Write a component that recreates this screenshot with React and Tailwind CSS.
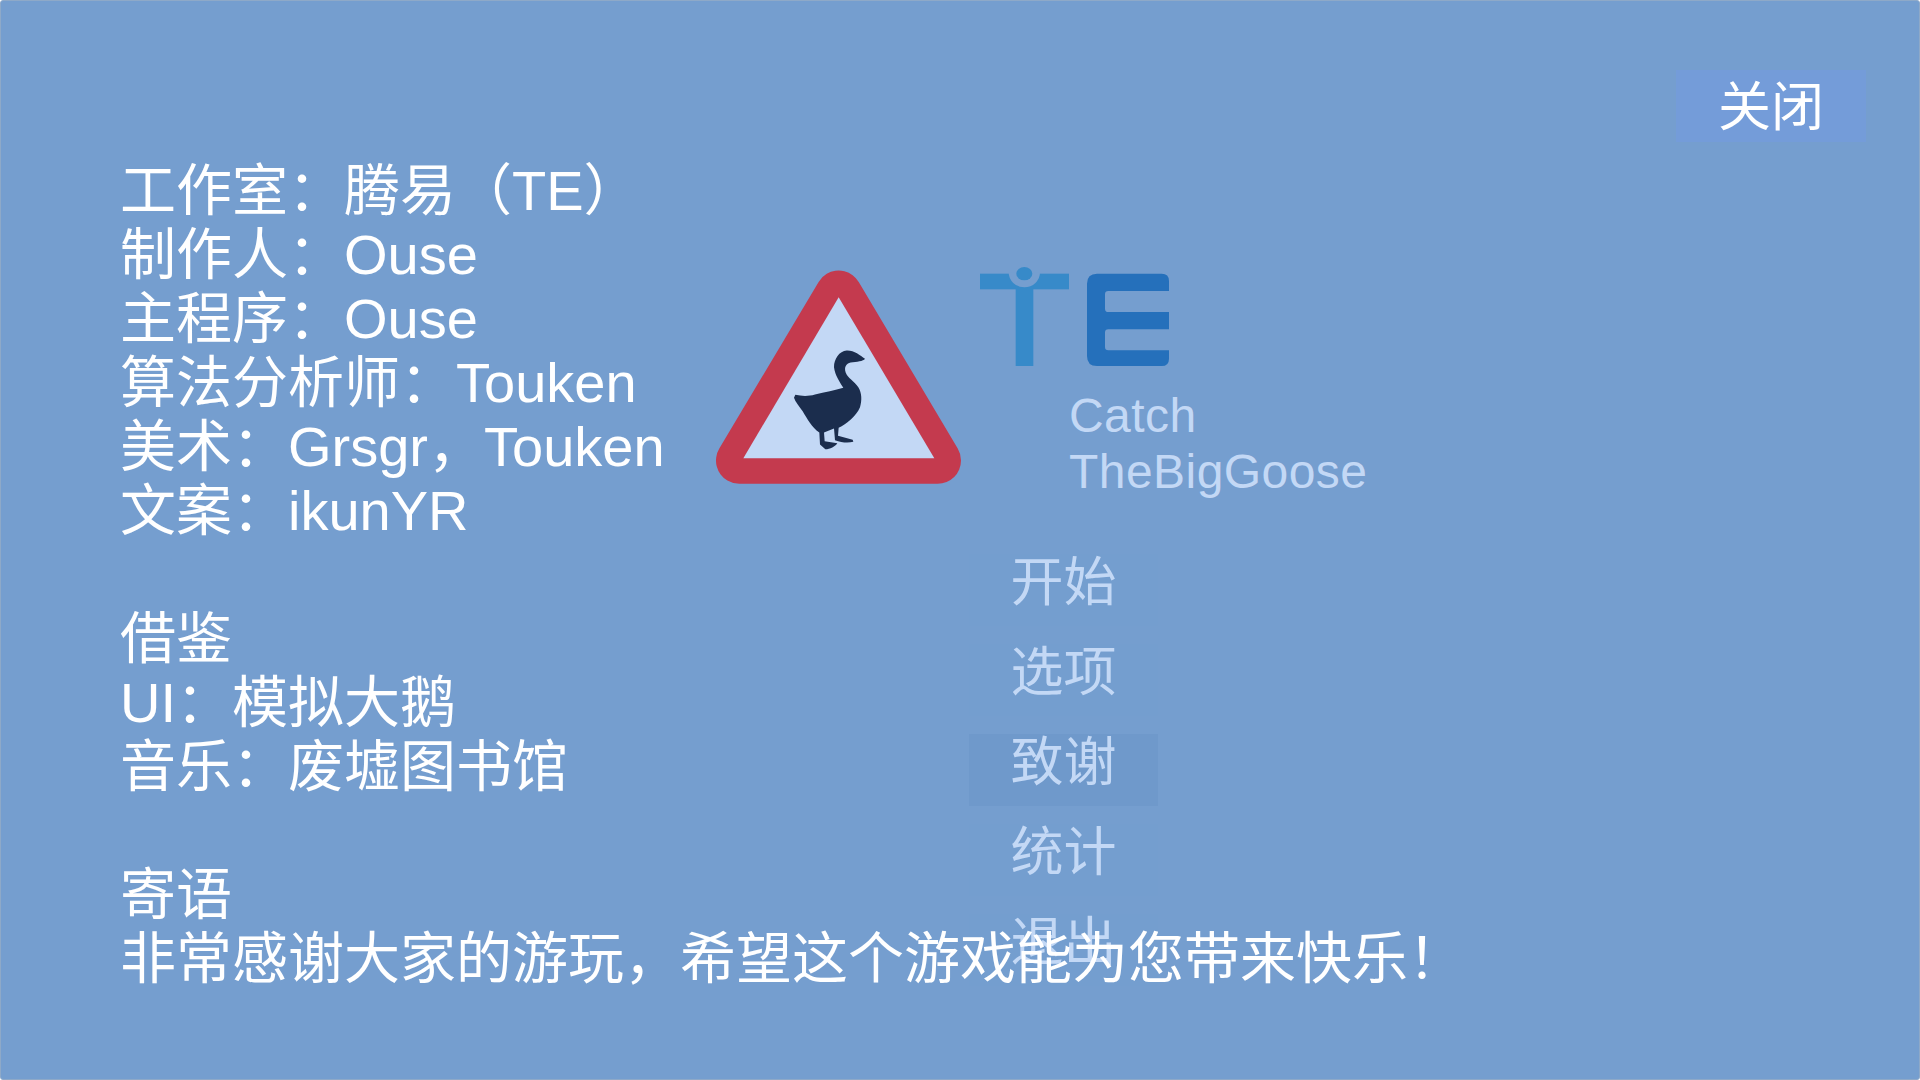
const FONT = { fontFamily: '"Liberation Sans", "Noto Sans CJK SC", sans-serif' };

const credits = [
  '工作室：腾易（TE）',
  '制作人：Ouse',
  '主程序：Ouse',
  '算法分析师：Touken',
  '美术：Grsgr，Touken',
  '文案：ikunYR',
  '',
  '借鉴',
  'UI：模拟大鹅',
  '音乐：废墟图书馆',
  '',
  '寄语',
  '非常感谢大家的游玩，希望这个游戏能为您带来快乐！',
];

const menu = ['开始', '选项', '致谢', '统计', '退出'];

function Sign() {
  return (
    <svg width="245" height="215" viewBox="48 60 735 642" className="shrink-0 mt-[3px]">
      <polygon points="416,130 118,630 713,630" fill="#c43a4e" stroke="#c43a4e" strokeWidth="140" strokeLinejoin="round" />
      <polygon points="416,140 130,623 703,623" fill="#c3d8f5" />
      <path
        fill="#1b2d4d"
        d="M495 325 C490 333 470 334 452 336 C438 340 432 350 437 366 C443 382 462 392 475 410 C486 428 486 450 480 470 C468 498 440 520 416 532 L414 556 L458 568 L460 574 C445 578 425 577 405 569 L402 534 L372 546 L374 572 L412 578 C406 588 390 596 376 596 L360 582 L358 546 C335 530 322 505 308 482 C298 468 286 455 282 442 L286 433 C305 437 325 438 345 432 C375 425 405 420 430 412 C420 395 405 375 402 350 C402 325 418 302 440 300 C462 299 480 314 495 325 Z"
      />
    </svg>
  );
}

function TeLogo() {
  return (
    <svg width="190" height="100" viewBox="60 50 570 300" className="block">
      <rect x="60" y="70" width="267" height="47" fill="#378ac9" />
      <rect x="167" y="100" width="53" height="247" fill="#378ac9" />
      <path d="M146 66 A47 45 0 0 0 240 66 Z" fill="#759ecf" />
      <ellipse cx="193" cy="70" rx="24" ry="20" fill="#378ac9" />
      <path
        fill="#2570bb"
        d="M411 70 H605 Q627 70 627 92 V122 H445 Q435 122 435 132 V175 Q435 185 445 185 H627 V237 H445 Q435 237 435 247 V290 Q435 300 445 300 H627 V325 Q627 347 605 347 H411 Q381 347 381 317 V100 Q381 70 411 70 Z"
      />
    </svg>
  );
}

export default function App() {
  return (
    <div style={FONT} className="relative w-[1920px] h-[1080px] overflow-hidden bg-[#759ecf] border border-[#8ea9c8] rounded-[3px]">
      {/* game menu beneath the credits panel */}
      <div className="pt-[266px] pl-[715px]">
        <div className="flex gap-[19px]">
          <Sign />
          <div>
            <TeLogo />
            <div className="ml-[89px] mt-[21px] w-[320px] text-[48px] tracking-[0.45px] leading-[56px] text-[#c3d8f5]">
              <div>Catch</div>
              <div>TheBigGoose</div>
            </div>
          </div>
        </div>
        <div className="ml-[253px] mt-[54px] flex flex-col gap-[18px] w-[189px] text-[#c3d8f5]">
          {menu.map((m, i) => (
            <div key={m} className={`h-[72px] flex items-center justify-center pb-[14px] text-[53px] leading-[56px] ${i === 2 ? 'bg-[#6f99cb]' : 'bg-[#749ecf]'}`}>
              {m}
            </div>
          ))}
        </div>
      </div>

      {/* credits panel */}
      <div className="absolute inset-0">
        <div className="pt-[158px] pl-[119px] text-white text-[56px] leading-[64px]">
          {credits.map((line, i) => (
            <div key={i} className="h-[64px] whitespace-nowrap">{line}</div>
          ))}
        </div>
        <button className="absolute left-[1675px] top-[69px] w-[190px] h-[72px] pt-[3px] bg-[#749cd9] text-white text-[53px] leading-[69px] text-center">
          关闭
        </button>
      </div>
    </div>
  );
}
